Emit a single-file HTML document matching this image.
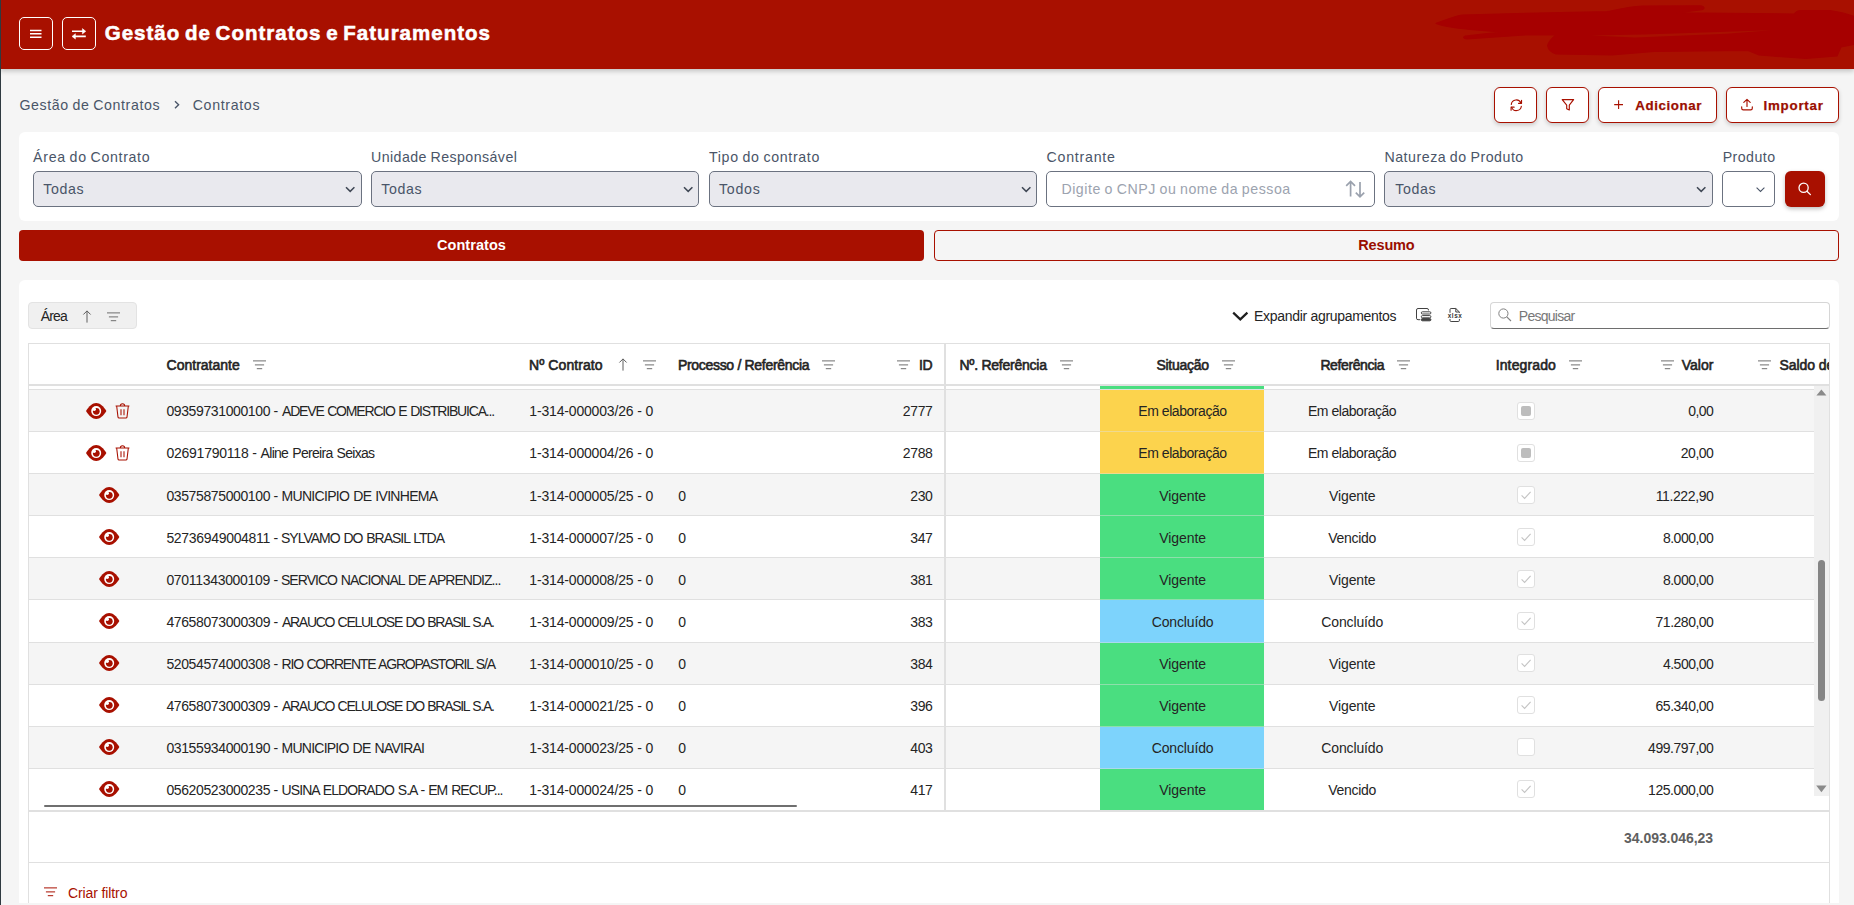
<!DOCTYPE html>
<html lang="pt-BR"><head><meta charset="utf-8"><title>Gestão de Contratos e Faturamentos</title>
<style>
html,body{margin:0;padding:0}
body{width:1854px;height:905px;overflow:hidden;background:#f5f5f5;position:relative;font-family:"Liberation Sans",sans-serif;color:#242424}
.t{position:absolute;white-space:nowrap}
.a{position:absolute;box-sizing:border-box}
svg{position:absolute;overflow:visible}
.hb{border:1px solid #fff;border-radius:5px}
.ob{border:1px solid #A81000;border-radius:6px;background:#fff;box-shadow:0 2px 4px rgba(0,0,0,.18)}
.sel{border:1px solid #6b7280;border-radius:5px;background:#e9e9ee;height:35.6px;top:171.2px;width:328.6px}
.row{left:29px;width:1785px;height:41px}
.rl{left:29px;width:1785px;height:1px;background:#e0e0e0}
.cb{left:1517px;width:18px;height:18px;border:1px solid #e0e0e0;border-radius:3px;background:#fff}

</style></head><body>
<div class="a" style="left:0;top:0;width:1854px;height:68.5px;background:#A81000;box-shadow:0 2px 5px rgba(0,0,0,.22)"></div>
<svg style="left:1430px;top:0px;" width="424" height="70" viewBox="0 0 424 70"><path fill="#A60000" stroke="#A60000" stroke-width="1.2" stroke-linejoin="round" d="M6 23.5C15 20 25 16 32 15L107 13L177 11.7C190 9 200 6.5 212 6L271 5.8C275 6.5 275 9 272 9.6L247 12.8L364 14C366 12 367 10.6 370 10.5L400 10.5C410 12 418 14 424 16.5L424 44.5L411 47L407 56L376 58.5L329 55L318 50.5L224 51.5L182 55L126 54C120 52 118 48 117.6 45.6C119 41 122 38 126 35L95 35L37 38.8C33 38.6 33 36.8 35 36.2L70 32L40 29.4C25 28 12 26 6 23.5Z"/>
<path fill="#A81000" d="M161 35.6L215 34.4L341 30.2L296 33.8L205 37.4Z"/></svg>
<div class="a " style="left:0px;top:0px;width:1px;height:905px;background:#2f3a40"></div>
<div class="a hb" style="left:19px;top:17px;width:34px;height:33px;"></div>
<div class="a hb" style="left:62px;top:17px;width:34px;height:33px;"></div>
<svg style="left:30px;top:29px;" width="12" height="10" viewBox="0 0 12 10"><path d="M0 1.4H11.5M0 4.7H11.5M0 8.2H11.5" stroke="#fff" stroke-width="1.5" fill="none"/></svg>
<svg style="left:71px;top:27px;" width="16" height="14" viewBox="0 0 16 14"><path d="M1 4.3H12M3.9 9.4H14.8" stroke="#fff" stroke-width="1.6" fill="none"/><path d="M11.4 1.6L14.8 4.3L11.4 7ZM4.4 6.7L1 9.4L4.4 12.1Z" fill="#fff" stroke="#fff" stroke-width=".5" stroke-linejoin="round"/></svg>
<svg style="left:174px;top:100px;" width="6" height="10" viewBox="0 0 6 10"><path d="M1 1.3L4.6 4.8L1 8.3" stroke="#4a5568" stroke-width="1.4" fill="none"/></svg>
<div class="a ob" style="left:1494px;top:87px;width:43px;height:36px;"></div>
<div class="a ob" style="left:1546px;top:87px;width:43px;height:36px;"></div>
<div class="a ob" style="left:1598px;top:87px;width:119px;height:36px;"></div>
<div class="a ob" style="left:1726px;top:87px;width:113px;height:36px;"></div>
<svg style="left:1509px;top:98.6px;" width="14.25" height="12.35" viewBox="0 0 15 13"><g stroke="#A81000" stroke-width="1.2" fill="none" stroke-linecap="round" stroke-linejoin="round">
<path d="M2.4 5.6A5.3 5.3 0 0 1 12.6 4.4"/><path d="M13.2 1.4V4.6H10"/>
<path d="M13 7.6A5.3 5.3 0 0 1 2.8 8.8"/><path d="M2.2 11.8V8.6H5.4"/></g></svg>
<svg style="left:1561px;top:98px;" width="14" height="13" viewBox="0 0 14 13"><path d="M1.2 1.6H12.6L8.3 7.2V12L5.7 10.7V7.2Z" stroke="#A81000" stroke-width="1.15" fill="none" stroke-linejoin="round"/></svg>
<svg style="left:1614px;top:100px;" width="10" height="10" viewBox="0 0 10 10"><path d="M4.6 0.2V9M0.2 4.6H9" stroke="#A81000" stroke-width="1.1" fill="none"/></svg>
<svg style="left:1740px;top:98px;" width="14" height="13" viewBox="0 0 14 13"><path d="M1.7 8.8V10.2A1.6 1.6 0 0 0 3.3 11.8H10.7A1.6 1.6 0 0 0 12.3 10.2V8.8M7 8.4V1.4M3.8 4.4L7 1.3L10.2 4.4" stroke="#A81000" stroke-width="1.15" fill="none" stroke-linecap="round" stroke-linejoin="round"/></svg>
<div class="a " style="left:19px;top:132px;width:1820px;height:89px;background:#fff;border-radius:6px"></div>
<div class="a sel" style="left:33.1px"></div>
<svg style="left:345.0px;top:186px;" width="11" height="7" viewBox="0 0 11 7"><path d="M1 1.2L5.2 5.4L9.4 1.2" stroke="#3f4754" stroke-width="1.5" fill="none"/></svg>
<div class="a sel" style="left:370.9px"></div>
<svg style="left:682.8px;top:186px;" width="11" height="7" viewBox="0 0 11 7"><path d="M1 1.2L5.2 5.4L9.4 1.2" stroke="#3f4754" stroke-width="1.5" fill="none"/></svg>
<div class="a sel" style="left:708.7px"></div>
<svg style="left:1020.6px;top:186px;" width="11" height="7" viewBox="0 0 11 7"><path d="M1 1.2L5.2 5.4L9.4 1.2" stroke="#3f4754" stroke-width="1.5" fill="none"/></svg>
<div class="a sel" style="left:1046.1px;background:#fff"></div>
<div class="a sel" style="left:1384.3px"></div>
<svg style="left:1696.1999999999998px;top:186px;" width="11" height="7" viewBox="0 0 11 7"><path d="M1 1.2L5.2 5.4L9.4 1.2" stroke="#3f4754" stroke-width="1.5" fill="none"/></svg>
<svg style="left:1344px;top:180px;" width="22" height="18" viewBox="0 0 22 18"><path d="M6.6 16.6V1.4M2.2 5.8L6.6 1.4L11 5.8M16 2V16.8M11.8 12.6L16 16.8L20.2 12.6" stroke="#9aa1ad" stroke-width="1.7" fill="none"/></svg>
<div class="a " style="left:1722px;top:171px;width:53px;height:36px;border:1px solid #6b7280;border-radius:5px;background:#fff"></div>
<svg style="left:1756.3px;top:187px;" width="10" height="6" viewBox="0 0 10 6"><path d="M0.6 0.6L4.5 4.4L8.4 0.6" stroke="#4a5568" stroke-width="1.1" fill="none"/></svg>
<div class="a " style="left:1785px;top:171px;width:40px;height:36px;background:#A81000;border-radius:6px;box-shadow:0 2px 4px rgba(0,0,0,.25)"></div>
<svg style="left:1798px;top:182px;" width="14" height="14" viewBox="0 0 14 14"><circle cx="5.6" cy="5.8" r="4.6" stroke="#fff" stroke-width="1.3" fill="none"/><path d="M9 9.2L12.4 12.6" stroke="#fff" stroke-width="1.3" stroke-linecap="round"/></svg>
<div class="a " style="left:19px;top:230px;width:905px;height:31px;background:#A81000;border-radius:4px"></div>
<div class="a " style="left:934px;top:230px;width:905px;height:31px;border:1px solid #A81000;border-radius:4px"></div>
<div class="a " style="left:19px;top:280px;width:1820px;height:623px;background:#fff;border-radius:6px 6px 0 0"></div>
<div class="a " style="left:28px;top:302px;width:109px;height:27px;background:#f0f0f0;border:1px solid #e3e3e3;border-radius:4px"></div>
<svg style="left:81.5px;top:310.2px;" width="10" height="13" viewBox="0 0 10 13"><path d="M5 12.6V0.9M1.4 4.5L5 0.9L8.6 4.5" stroke="#5e5e5e" stroke-width="1" fill="none"/></svg>
<svg style="left:107px;top:311.6px;" width="13" height="10" viewBox="0 0 13 10"><path d="M0 0.9H13M1.9 4.9H11.1M3.8 8.7H9.2" stroke="#6e6e6e" stroke-width="1" fill="none"/></svg>
<svg style="left:1232px;top:311px;" width="17" height="10" viewBox="0 0 17 10"><path d="M1.2 1.6L8.3 8.4L15.4 1.6" stroke="#1f1f1f" stroke-width="2.2" fill="none"/></svg>
<svg style="left:1415px;top:307px;" width="17" height="15" viewBox="0 0 17 15"><g fill="none" stroke="#424242" stroke-width="1">
<path d="M5.2 12.7H3A1.5 1.5 0 0 1 1.5 11.2V3A1.5 1.5 0 0 1 3 1.5H12A1.5 1.5 0 0 1 13.5 3V3.4"/>
<rect x="6.3" y="4.8" width="9.6" height="2.2" rx="1.1"/><rect x="6.3" y="8.6" width="9.6" height="2.2" rx="1.1"/><rect x="6.3" y="11.6" width="9.6" height="2.2" rx="1.1" fill="#424242"/></g></svg>
<svg style="left:1447px;top:307px;" width="16" height="16" viewBox="0 0 16 16"><g fill="none" stroke="#424242" stroke-width="1">
<path d="M3 5.8V2.6A1.1 1.1 0 0 1 4.1 1.5H8.8L12.4 5V5.8M8.8 1.5V5H12.4M3 12V13.4A1.1 1.1 0 0 0 4.1 14.5H11.3A1.1 1.1 0 0 0 12.4 13.4V12"/></g>
<text x="7.8" y="11.3" font-family="Liberation Sans, sans-serif" font-size="6.4" font-weight="700" text-anchor="middle" fill="#333" textLength="14">xlsx</text></svg>
<div class="a " style="left:1490px;top:302px;width:340px;height:27px;background:#fff;border:1px solid #d6d6d6;border-bottom:1px solid #6e6e6e;border-radius:4px"></div>
<svg style="left:1497px;top:307px;" width="16" height="16" viewBox="0 0 16 16"><circle cx="6.4" cy="6.5" r="4.6" stroke="#808080" stroke-width="1" fill="none"/><path d="M9.8 9.9L14 14" stroke="#808080" stroke-width="1.1"/></svg>
<div class="a " style="left:28px;top:343px;width:1802px;height:560px;border:1px solid #e0e0e0;border-bottom:none"></div>
<div class="a " style="left:29px;top:384px;width:1800px;height:2px;background:#e0e0e0"></div>
<div class="a " style="left:1100px;top:386px;width:164px;height:3px;background:#4ade80"></div>
<div class="a rl" style="left:29px;top:389px;width:1785px;height:1px;"></div>
<div class="a row" style="top:390px;height:41px;background:#f5f5f5"></div>
<div class="a rl" style="top:431px"></div>
<div class="a " style="left:1100px;top:390px;width:164px;height:41px;background:#fcd34d"></div>
<div class="a " style="left:1100px;top:431px;width:164px;height:1px;background:#fcd34d;opacity:.55"></div>
<svg style="left:85.7px;top:403px;" width="20.4" height="16" viewBox="0 0 20.4 16"><path d="M0 8C3 3.2 6.4 0 10.2 0C14 0 17.4 3.2 20.4 8C17.4 12.8 14 16 10.2 16C6.4 16 3 12.8 0 8Z" fill="#A81000"/>
<circle cx="10.2" cy="8.1" r="5" fill="#fff"/><circle cx="10.3" cy="8.3" r="3.35" fill="#A81000"/><circle cx="8.2" cy="6.2" r="1.75" fill="#fff"/></svg>
<svg style="left:114.8px;top:403px;" width="15" height="16" viewBox="0 0 15 16"><g fill="none" stroke="#A81000" stroke-width="1.05">
<path d="M0.6 2.9H14.4M5.3 2.9A2.2 2.2 0 0 1 9.7 2.9M1.7 3.2L3 14.1A1.1 1.1 0 0 0 4.1 15H10.9A1.1 1.1 0 0 0 12 14.1L13.3 3.2M6 6.2V12.2M9 6.2V12.2"/></g></svg>
<div class="a cb" style="top:402px"></div>
<div class="a " style="left:1521px;top:406px;width:10px;height:10px;background:#bdbdbd;border-radius:2px"></div>
<div class="a row" style="top:432px;height:41px;background:#fff"></div>
<div class="a rl" style="top:473px"></div>
<div class="a " style="left:1100px;top:432px;width:164px;height:41px;background:#fcd34d"></div>
<div class="a " style="left:1100px;top:473px;width:164px;height:1px;background:#fcd34d;opacity:.55"></div>
<svg style="left:85.7px;top:445px;" width="20.4" height="16" viewBox="0 0 20.4 16"><path d="M0 8C3 3.2 6.4 0 10.2 0C14 0 17.4 3.2 20.4 8C17.4 12.8 14 16 10.2 16C6.4 16 3 12.8 0 8Z" fill="#A81000"/>
<circle cx="10.2" cy="8.1" r="5" fill="#fff"/><circle cx="10.3" cy="8.3" r="3.35" fill="#A81000"/><circle cx="8.2" cy="6.2" r="1.75" fill="#fff"/></svg>
<svg style="left:114.8px;top:445px;" width="15" height="16" viewBox="0 0 15 16"><g fill="none" stroke="#A81000" stroke-width="1.05">
<path d="M0.6 2.9H14.4M5.3 2.9A2.2 2.2 0 0 1 9.7 2.9M1.7 3.2L3 14.1A1.1 1.1 0 0 0 4.1 15H10.9A1.1 1.1 0 0 0 12 14.1L13.3 3.2M6 6.2V12.2M9 6.2V12.2"/></g></svg>
<div class="a cb" style="top:444px"></div>
<div class="a " style="left:1521px;top:448px;width:10px;height:10px;background:#bdbdbd;border-radius:2px"></div>
<div class="a row" style="top:474px;height:41px;background:#f5f5f5"></div>
<div class="a rl" style="top:515px"></div>
<div class="a " style="left:1100px;top:474px;width:164px;height:41px;background:#4ade80"></div>
<div class="a " style="left:1100px;top:515px;width:164px;height:1px;background:#4ade80;opacity:.55"></div>
<svg style="left:99.3px;top:487px;" width="20.4" height="16" viewBox="0 0 20.4 16"><path d="M0 8C3 3.2 6.4 0 10.2 0C14 0 17.4 3.2 20.4 8C17.4 12.8 14 16 10.2 16C6.4 16 3 12.8 0 8Z" fill="#A81000"/>
<circle cx="10.2" cy="8.1" r="5" fill="#fff"/><circle cx="10.3" cy="8.3" r="3.35" fill="#A81000"/><circle cx="8.2" cy="6.2" r="1.75" fill="#fff"/></svg>
<div class="a cb" style="top:486px"></div>
<svg style="left:1520px;top:489px;" width="12" height="12" viewBox="0 0 12 12"><path d="M1.6 6.4L4.6 9.4L10.6 2.8" stroke="#c4c4c4" stroke-width="1.1" fill="none"/></svg>
<div class="a row" style="top:516px;height:41px;background:#fff"></div>
<div class="a rl" style="top:557px"></div>
<div class="a " style="left:1100px;top:516px;width:164px;height:41px;background:#4ade80"></div>
<div class="a " style="left:1100px;top:557px;width:164px;height:1px;background:#4ade80;opacity:.55"></div>
<svg style="left:99.3px;top:529px;" width="20.4" height="16" viewBox="0 0 20.4 16"><path d="M0 8C3 3.2 6.4 0 10.2 0C14 0 17.4 3.2 20.4 8C17.4 12.8 14 16 10.2 16C6.4 16 3 12.8 0 8Z" fill="#A81000"/>
<circle cx="10.2" cy="8.1" r="5" fill="#fff"/><circle cx="10.3" cy="8.3" r="3.35" fill="#A81000"/><circle cx="8.2" cy="6.2" r="1.75" fill="#fff"/></svg>
<div class="a cb" style="top:528px"></div>
<svg style="left:1520px;top:531px;" width="12" height="12" viewBox="0 0 12 12"><path d="M1.6 6.4L4.6 9.4L10.6 2.8" stroke="#c4c4c4" stroke-width="1.1" fill="none"/></svg>
<div class="a row" style="top:558px;height:41px;background:#f5f5f5"></div>
<div class="a rl" style="top:599px"></div>
<div class="a " style="left:1100px;top:558px;width:164px;height:41px;background:#4ade80"></div>
<div class="a " style="left:1100px;top:599px;width:164px;height:1px;background:#4ade80;opacity:.55"></div>
<svg style="left:99.3px;top:571px;" width="20.4" height="16" viewBox="0 0 20.4 16"><path d="M0 8C3 3.2 6.4 0 10.2 0C14 0 17.4 3.2 20.4 8C17.4 12.8 14 16 10.2 16C6.4 16 3 12.8 0 8Z" fill="#A81000"/>
<circle cx="10.2" cy="8.1" r="5" fill="#fff"/><circle cx="10.3" cy="8.3" r="3.35" fill="#A81000"/><circle cx="8.2" cy="6.2" r="1.75" fill="#fff"/></svg>
<div class="a cb" style="top:570px"></div>
<svg style="left:1520px;top:573px;" width="12" height="12" viewBox="0 0 12 12"><path d="M1.6 6.4L4.6 9.4L10.6 2.8" stroke="#c4c4c4" stroke-width="1.1" fill="none"/></svg>
<div class="a row" style="top:600px;height:42px;background:#fff"></div>
<div class="a rl" style="top:642px"></div>
<div class="a " style="left:1100px;top:600px;width:164px;height:42px;background:#7dd3fc"></div>
<div class="a " style="left:1100px;top:642px;width:164px;height:1px;background:#7dd3fc;opacity:.55"></div>
<svg style="left:99.3px;top:613px;" width="20.4" height="16" viewBox="0 0 20.4 16"><path d="M0 8C3 3.2 6.4 0 10.2 0C14 0 17.4 3.2 20.4 8C17.4 12.8 14 16 10.2 16C6.4 16 3 12.8 0 8Z" fill="#A81000"/>
<circle cx="10.2" cy="8.1" r="5" fill="#fff"/><circle cx="10.3" cy="8.3" r="3.35" fill="#A81000"/><circle cx="8.2" cy="6.2" r="1.75" fill="#fff"/></svg>
<div class="a cb" style="top:612px"></div>
<svg style="left:1520px;top:615px;" width="12" height="12" viewBox="0 0 12 12"><path d="M1.6 6.4L4.6 9.4L10.6 2.8" stroke="#c4c4c4" stroke-width="1.1" fill="none"/></svg>
<div class="a row" style="top:643px;height:41px;background:#f5f5f5"></div>
<div class="a rl" style="top:684px"></div>
<div class="a " style="left:1100px;top:643px;width:164px;height:41px;background:#4ade80"></div>
<div class="a " style="left:1100px;top:684px;width:164px;height:1px;background:#4ade80;opacity:.55"></div>
<svg style="left:99.3px;top:655px;" width="20.4" height="16" viewBox="0 0 20.4 16"><path d="M0 8C3 3.2 6.4 0 10.2 0C14 0 17.4 3.2 20.4 8C17.4 12.8 14 16 10.2 16C6.4 16 3 12.8 0 8Z" fill="#A81000"/>
<circle cx="10.2" cy="8.1" r="5" fill="#fff"/><circle cx="10.3" cy="8.3" r="3.35" fill="#A81000"/><circle cx="8.2" cy="6.2" r="1.75" fill="#fff"/></svg>
<div class="a cb" style="top:654px"></div>
<svg style="left:1520px;top:657px;" width="12" height="12" viewBox="0 0 12 12"><path d="M1.6 6.4L4.6 9.4L10.6 2.8" stroke="#c4c4c4" stroke-width="1.1" fill="none"/></svg>
<div class="a row" style="top:685px;height:41px;background:#fff"></div>
<div class="a rl" style="top:726px"></div>
<div class="a " style="left:1100px;top:685px;width:164px;height:41px;background:#4ade80"></div>
<div class="a " style="left:1100px;top:726px;width:164px;height:1px;background:#4ade80;opacity:.55"></div>
<svg style="left:99.3px;top:697px;" width="20.4" height="16" viewBox="0 0 20.4 16"><path d="M0 8C3 3.2 6.4 0 10.2 0C14 0 17.4 3.2 20.4 8C17.4 12.8 14 16 10.2 16C6.4 16 3 12.8 0 8Z" fill="#A81000"/>
<circle cx="10.2" cy="8.1" r="5" fill="#fff"/><circle cx="10.3" cy="8.3" r="3.35" fill="#A81000"/><circle cx="8.2" cy="6.2" r="1.75" fill="#fff"/></svg>
<div class="a cb" style="top:696px"></div>
<svg style="left:1520px;top:699px;" width="12" height="12" viewBox="0 0 12 12"><path d="M1.6 6.4L4.6 9.4L10.6 2.8" stroke="#c4c4c4" stroke-width="1.1" fill="none"/></svg>
<div class="a row" style="top:727px;height:41px;background:#f5f5f5"></div>
<div class="a rl" style="top:768px"></div>
<div class="a " style="left:1100px;top:727px;width:164px;height:41px;background:#7dd3fc"></div>
<div class="a " style="left:1100px;top:768px;width:164px;height:1px;background:#7dd3fc;opacity:.55"></div>
<svg style="left:99.3px;top:739px;" width="20.4" height="16" viewBox="0 0 20.4 16"><path d="M0 8C3 3.2 6.4 0 10.2 0C14 0 17.4 3.2 20.4 8C17.4 12.8 14 16 10.2 16C6.4 16 3 12.8 0 8Z" fill="#A81000"/>
<circle cx="10.2" cy="8.1" r="5" fill="#fff"/><circle cx="10.3" cy="8.3" r="3.35" fill="#A81000"/><circle cx="8.2" cy="6.2" r="1.75" fill="#fff"/></svg>
<div class="a cb" style="top:738px"></div>
<div class="a row" style="top:769px;height:41px;background:#fff"></div>
<div class="a " style="left:1100px;top:769px;width:164px;height:41px;background:#4ade80"></div>
<svg style="left:99.3px;top:781px;" width="20.4" height="16" viewBox="0 0 20.4 16"><path d="M0 8C3 3.2 6.4 0 10.2 0C14 0 17.4 3.2 20.4 8C17.4 12.8 14 16 10.2 16C6.4 16 3 12.8 0 8Z" fill="#A81000"/>
<circle cx="10.2" cy="8.1" r="5" fill="#fff"/><circle cx="10.3" cy="8.3" r="3.35" fill="#A81000"/><circle cx="8.2" cy="6.2" r="1.75" fill="#fff"/></svg>
<div class="a cb" style="top:780px"></div>
<svg style="left:1520px;top:783px;" width="12" height="12" viewBox="0 0 12 12"><path d="M1.6 6.4L4.6 9.4L10.6 2.8" stroke="#c4c4c4" stroke-width="1.1" fill="none"/></svg>
<div class="a " style="left:944px;top:344px;width:2px;height:466px;background:#e0e0e0"></div>
<svg style="left:252.9px;top:359.8px;" width="13" height="10" viewBox="0 0 13 10"><path d="M0 0.9H13M1.9 4.9H11.1M3.8 8.7H9.2" stroke="#6e6e6e" stroke-width="1" fill="none"/></svg>
<svg style="left:617.5px;top:358.3px;" width="10" height="13" viewBox="0 0 10 13"><path d="M5 12.6V0.9M1.4 4.5L5 0.9L8.6 4.5" stroke="#5e5e5e" stroke-width="1" fill="none"/></svg>
<svg style="left:643px;top:359.8px;" width="13" height="10" viewBox="0 0 13 10"><path d="M0 0.9H13M1.9 4.9H11.1M3.8 8.7H9.2" stroke="#6e6e6e" stroke-width="1" fill="none"/></svg>
<svg style="left:822px;top:359.8px;" width="13" height="10" viewBox="0 0 13 10"><path d="M0 0.9H13M1.9 4.9H11.1M3.8 8.7H9.2" stroke="#6e6e6e" stroke-width="1" fill="none"/></svg>
<svg style="left:897px;top:359.8px;" width="13" height="10" viewBox="0 0 13 10"><path d="M0 0.9H13M1.9 4.9H11.1M3.8 8.7H9.2" stroke="#6e6e6e" stroke-width="1" fill="none"/></svg>
<svg style="left:1059.9px;top:359.8px;" width="13" height="10" viewBox="0 0 13 10"><path d="M0 0.9H13M1.9 4.9H11.1M3.8 8.7H9.2" stroke="#6e6e6e" stroke-width="1" fill="none"/></svg>
<svg style="left:1221.6px;top:359.8px;" width="13" height="10" viewBox="0 0 13 10"><path d="M0 0.9H13M1.9 4.9H11.1M3.8 8.7H9.2" stroke="#6e6e6e" stroke-width="1" fill="none"/></svg>
<svg style="left:1397px;top:359.8px;" width="13" height="10" viewBox="0 0 13 10"><path d="M0 0.9H13M1.9 4.9H11.1M3.8 8.7H9.2" stroke="#6e6e6e" stroke-width="1" fill="none"/></svg>
<svg style="left:1569px;top:359.8px;" width="13" height="10" viewBox="0 0 13 10"><path d="M0 0.9H13M1.9 4.9H11.1M3.8 8.7H9.2" stroke="#6e6e6e" stroke-width="1" fill="none"/></svg>
<svg style="left:1660.7px;top:359.8px;" width="13" height="10" viewBox="0 0 13 10"><path d="M0 0.9H13M1.9 4.9H11.1M3.8 8.7H9.2" stroke="#6e6e6e" stroke-width="1" fill="none"/></svg>
<svg style="left:1758.3px;top:359.8px;" width="13" height="10" viewBox="0 0 13 10"><path d="M0 0.9H13M1.9 4.9H11.1M3.8 8.7H9.2" stroke="#6e6e6e" stroke-width="1" fill="none"/></svg>
<div class="a" style="left:1779px;top:350px;width:50px;height:30px;overflow:hidden"><span class="t" style="left:0.4px;top:6.15px;font-size:14px;line-height:18px;-webkit-text-stroke:0.6px #242424;letter-spacing:-0.05px">Saldo devedor</span></div>
<div class="a " style="left:1814px;top:386px;width:15px;height:410px;background:#f0f0f0"></div>
<svg style="left:1816px;top:389px;" width="11" height="7" viewBox="0 0 11 7"><path d="M0.4 6.6L5.4 0.4L10.4 6.6Z" fill="#8a8a8a"/></svg>
<svg style="left:1816px;top:785px;" width="11" height="8" viewBox="0 0 11 8"><path d="M0.2 0.4L5.4 7.2L10.6 0.4Z" fill="#8a8a8a"/></svg>
<div class="a " style="left:1818px;top:560px;width:7px;height:141px;background:#858585;border-radius:3.5px"></div>
<div class="a " style="left:44px;top:805px;width:753px;height:2px;background:#6f6f6f;border-radius:1px"></div>
<div class="a " style="left:29px;top:810px;width:1800px;height:2px;background:#e0e0e0"></div>
<div class="a " style="left:29px;top:862px;width:1800px;height:1px;background:#e0e0e0"></div>
<svg style="left:44px;top:887.2px;" width="13" height="10" viewBox="0 0 13 10"><path d="M0 0.9H13M1.9 4.9H11.1M3.8 8.7H9.2" stroke="#A81000" stroke-width="1" fill="none"/></svg>
<span class="t" style="top:19.40px;font-size:20.5px;line-height:27px;color:#fff;font-weight:700;letter-spacing:1.010px;left:104.70px;-webkit-text-stroke:0.55px #fff;word-spacing:-2px;">Gestão de Contratos e Faturamentos</span>
<span class="t" style="top:95.88px;font-size:14.2px;line-height:18px;color:#4a5568;letter-spacing:0.604px;left:19.40px;word-spacing:-0.8px;">Gestão de Contratos</span>
<span class="t" style="top:95.88px;font-size:14.2px;line-height:18px;color:#4a5568;letter-spacing:0.665px;left:192.70px;">Contratos</span>
<span class="t" style="top:96.59px;font-size:13.3px;line-height:17px;color:#9a0e00;font-weight:700;letter-spacing:0.586px;left:1635.30px;-webkit-text-stroke:0.25px #9a0e00;">Adicionar</span>
<span class="t" style="top:96.59px;font-size:13.3px;line-height:17px;color:#9a0e00;font-weight:700;letter-spacing:0.808px;left:1763.40px;-webkit-text-stroke:0.25px #9a0e00;">Importar</span>
<span class="t" style="top:147.68px;font-size:14.2px;line-height:18px;color:#4a5568;letter-spacing:0.672px;left:33.10px;word-spacing:-0.8px;">Área do Contrato</span>
<span class="t" style="top:147.68px;font-size:14.2px;line-height:18px;color:#4a5568;letter-spacing:0.436px;left:371.00px;word-spacing:-0.8px;">Unidade Responsável</span>
<span class="t" style="top:147.68px;font-size:14.2px;line-height:18px;color:#4a5568;letter-spacing:0.662px;left:709.00px;word-spacing:-0.8px;">Tipo do contrato</span>
<span class="t" style="top:147.68px;font-size:14.2px;line-height:18px;color:#4a5568;letter-spacing:0.743px;left:1046.60px;word-spacing:-0.8px;">Contrante</span>
<span class="t" style="top:147.68px;font-size:14.2px;line-height:18px;color:#4a5568;letter-spacing:0.530px;left:1384.40px;word-spacing:-0.8px;">Natureza do Produto</span>
<span class="t" style="top:147.68px;font-size:14.2px;line-height:18px;color:#4a5568;letter-spacing:0.442px;left:1722.70px;word-spacing:-0.8px;">Produto</span>
<span class="t" style="top:179.88px;font-size:14.2px;line-height:18px;color:#4a5568;letter-spacing:0.648px;left:43.20px;">Todas</span>
<span class="t" style="top:179.88px;font-size:14.2px;line-height:18px;color:#4a5568;letter-spacing:0.648px;left:381.20px;">Todas</span>
<span class="t" style="top:179.88px;font-size:14.2px;line-height:18px;color:#4a5568;letter-spacing:0.748px;left:719.00px;">Todos</span>
<span class="t" style="top:179.88px;font-size:14.2px;line-height:18px;color:#4a5568;letter-spacing:0.648px;left:1395.20px;">Todas</span>
<span class="t" style="top:179.88px;font-size:14.2px;line-height:18px;color:#9ca3af;letter-spacing:0.533px;left:1061.40px;word-spacing:-0.8px;">Digite o CNPJ ou nome da pessoa</span>
<span class="t" style="top:235.78px;font-size:14.5px;line-height:19px;color:#fff;font-weight:700;letter-spacing:0.057px;left:437.00px;">Contratos</span>
<span class="t" style="top:235.78px;font-size:14.5px;line-height:19px;color:#9a0e00;font-weight:700;letter-spacing:-0.170px;left:1358.30px;">Resumo</span>
<span class="t" style="top:307.15px;font-size:14px;line-height:18px;color:#242424;letter-spacing:-0.870px;left:40.80px;">Área</span>
<span class="t" style="top:306.65px;font-size:14px;line-height:18px;color:#242424;letter-spacing:-0.303px;left:1254.00px;">Expandir agrupamentos</span>
<span class="t" style="top:306.65px;font-size:14px;line-height:18px;color:#787878;letter-spacing:-0.741px;left:1518.80px;">Pesquisar</span>
<span class="t" style="top:402.15px;font-size:14px;line-height:18px;color:#242424;letter-spacing:-0.379px;left:166.40px;">09359731000100 -</span>
<span class="t" style="top:402.15px;font-size:14px;line-height:18px;color:#242424;letter-spacing:-1.178px;left:282.00px;word-spacing:0.9px;">ADEVE COMERCIO E DISTRIBUICA...</span>
<span class="t" style="top:402.15px;font-size:14px;line-height:18px;color:#242424;letter-spacing:-0.167px;left:529.30px;">1-314-000003/26 - 0</span>
<span class="t" style="top:402.15px;font-size:14px;line-height:18px;color:#242424;letter-spacing:-0.369px;right:921.47px;">2777</span>
<span class="t" style="top:402.15px;font-size:14px;line-height:18px;color:#242424;letter-spacing:-0.452px;left:782.47px;width:800px;text-align:center;">Em elaboração</span>
<span class="t" style="top:402.15px;font-size:14px;line-height:18px;color:#242424;letter-spacing:-0.452px;left:952.07px;width:800px;text-align:center;">Em elaboração</span>
<span class="t" style="top:402.15px;font-size:14px;line-height:18px;color:#242424;letter-spacing:-0.502px;right:140.60px;">0,00</span>
<span class="t" style="top:444.15px;font-size:14px;line-height:18px;color:#242424;letter-spacing:-0.229px;left:166.40px;">02691790118 -</span>
<span class="t" style="top:444.15px;font-size:14px;line-height:18px;color:#242424;letter-spacing:-0.704px;left:260.60px;word-spacing:0.9px;">Aline Pereira Seixas</span>
<span class="t" style="top:444.15px;font-size:14px;line-height:18px;color:#242424;letter-spacing:-0.167px;left:529.30px;">1-314-000004/26 - 0</span>
<span class="t" style="top:444.15px;font-size:14px;line-height:18px;color:#242424;letter-spacing:-0.369px;right:921.47px;">2788</span>
<span class="t" style="top:444.15px;font-size:14px;line-height:18px;color:#242424;letter-spacing:-0.452px;left:782.47px;width:800px;text-align:center;">Em elaboração</span>
<span class="t" style="top:444.15px;font-size:14px;line-height:18px;color:#242424;letter-spacing:-0.452px;left:952.07px;width:800px;text-align:center;">Em elaboração</span>
<span class="t" style="top:444.15px;font-size:14px;line-height:18px;color:#242424;letter-spacing:-0.477px;right:140.58px;">20,00</span>
<span class="t" style="top:487.15px;font-size:14px;line-height:18px;color:#242424;letter-spacing:-0.379px;left:166.40px;">03575875000100 -</span>
<span class="t" style="top:487.15px;font-size:14px;line-height:18px;color:#242424;letter-spacing:-0.704px;left:281.60px;word-spacing:0.9px;">MUNICIPIO DE IVINHEMA</span>
<span class="t" style="top:487.15px;font-size:14px;line-height:18px;color:#242424;letter-spacing:-0.167px;left:529.30px;">1-314-000005/25 - 0</span>
<span class="t" style="top:487.15px;font-size:14px;line-height:18px;color:#242424;letter-spacing:-1.097px;left:678.30px;">0</span>
<span class="t" style="top:487.15px;font-size:14px;line-height:18px;color:#242424;letter-spacing:-0.366px;right:921.47px;">230</span>
<span class="t" style="top:487.15px;font-size:14px;line-height:18px;color:#242424;letter-spacing:-0.091px;left:782.65px;width:800px;text-align:center;">Vigente</span>
<span class="t" style="top:487.15px;font-size:14px;line-height:18px;color:#242424;letter-spacing:-0.091px;left:952.25px;width:800px;text-align:center;">Vigente</span>
<span class="t" style="top:487.15px;font-size:14px;line-height:18px;color:#242424;letter-spacing:-0.372px;right:140.47px;">11.222,90</span>
<span class="t" style="top:529.15px;font-size:14px;line-height:18px;color:#242424;letter-spacing:-0.314px;left:166.40px;">52736949004811 -</span>
<span class="t" style="top:529.15px;font-size:14px;line-height:18px;color:#242424;letter-spacing:-1.001px;left:281.00px;word-spacing:0.9px;">SYLVAMO DO BRASIL LTDA</span>
<span class="t" style="top:529.15px;font-size:14px;line-height:18px;color:#242424;letter-spacing:-0.167px;left:529.30px;">1-314-000007/25 - 0</span>
<span class="t" style="top:529.15px;font-size:14px;line-height:18px;color:#242424;letter-spacing:-1.097px;left:678.30px;">0</span>
<span class="t" style="top:529.15px;font-size:14px;line-height:18px;color:#242424;letter-spacing:-0.366px;right:921.47px;">347</span>
<span class="t" style="top:529.15px;font-size:14px;line-height:18px;color:#242424;letter-spacing:-0.091px;left:782.65px;width:800px;text-align:center;">Vigente</span>
<span class="t" style="top:529.15px;font-size:14px;line-height:18px;color:#242424;letter-spacing:-0.290px;left:952.16px;width:800px;text-align:center;">Vencido</span>
<span class="t" style="top:529.15px;font-size:14px;line-height:18px;color:#242424;letter-spacing:-0.502px;right:140.60px;">8.000,00</span>
<span class="t" style="top:571.15px;font-size:14px;line-height:18px;color:#242424;letter-spacing:-0.314px;left:166.40px;">07011343000109 -</span>
<span class="t" style="top:571.15px;font-size:14px;line-height:18px;color:#242424;letter-spacing:-0.965px;left:281.00px;word-spacing:0.9px;">SERVICO NACIONAL DE APRENDIZ...</span>
<span class="t" style="top:571.15px;font-size:14px;line-height:18px;color:#242424;letter-spacing:-0.167px;left:529.30px;">1-314-000008/25 - 0</span>
<span class="t" style="top:571.15px;font-size:14px;line-height:18px;color:#242424;letter-spacing:-1.097px;left:678.30px;">0</span>
<span class="t" style="top:571.15px;font-size:14px;line-height:18px;color:#242424;letter-spacing:-0.366px;right:921.47px;">381</span>
<span class="t" style="top:571.15px;font-size:14px;line-height:18px;color:#242424;letter-spacing:-0.091px;left:782.65px;width:800px;text-align:center;">Vigente</span>
<span class="t" style="top:571.15px;font-size:14px;line-height:18px;color:#242424;letter-spacing:-0.091px;left:952.25px;width:800px;text-align:center;">Vigente</span>
<span class="t" style="top:571.15px;font-size:14px;line-height:18px;color:#242424;letter-spacing:-0.502px;right:140.60px;">8.000,00</span>
<span class="t" style="top:613.15px;font-size:14px;line-height:18px;color:#242424;letter-spacing:-0.379px;left:166.40px;">47658073000309 -</span>
<span class="t" style="top:613.15px;font-size:14px;line-height:18px;color:#242424;letter-spacing:-1.297px;left:282.00px;word-spacing:0.9px;">ARAUCO CELULOSE DO BRASIL S.A.</span>
<span class="t" style="top:613.15px;font-size:14px;line-height:18px;color:#242424;letter-spacing:-0.167px;left:529.30px;">1-314-000009/25 - 0</span>
<span class="t" style="top:613.15px;font-size:14px;line-height:18px;color:#242424;letter-spacing:-1.097px;left:678.30px;">0</span>
<span class="t" style="top:613.15px;font-size:14px;line-height:18px;color:#242424;letter-spacing:-0.366px;right:921.47px;">383</span>
<span class="t" style="top:613.15px;font-size:14px;line-height:18px;color:#242424;letter-spacing:-0.139px;left:782.63px;width:800px;text-align:center;">Concluído</span>
<span class="t" style="top:613.15px;font-size:14px;line-height:18px;color:#242424;letter-spacing:-0.139px;left:952.23px;width:800px;text-align:center;">Concluído</span>
<span class="t" style="top:613.15px;font-size:14px;line-height:18px;color:#242424;letter-spacing:-0.488px;right:140.59px;">71.280,00</span>
<span class="t" style="top:655.15px;font-size:14px;line-height:18px;color:#242424;letter-spacing:-0.379px;left:166.40px;">52054574000308 -</span>
<span class="t" style="top:655.15px;font-size:14px;line-height:18px;color:#242424;letter-spacing:-1.210px;left:281.60px;word-spacing:0.9px;">RIO CORRENTE AGROPASTORIL S/A</span>
<span class="t" style="top:655.15px;font-size:14px;line-height:18px;color:#242424;letter-spacing:-0.167px;left:529.30px;">1-314-000010/25 - 0</span>
<span class="t" style="top:655.15px;font-size:14px;line-height:18px;color:#242424;letter-spacing:-1.097px;left:678.30px;">0</span>
<span class="t" style="top:655.15px;font-size:14px;line-height:18px;color:#242424;letter-spacing:-0.366px;right:921.47px;">384</span>
<span class="t" style="top:655.15px;font-size:14px;line-height:18px;color:#242424;letter-spacing:-0.091px;left:782.65px;width:800px;text-align:center;">Vigente</span>
<span class="t" style="top:655.15px;font-size:14px;line-height:18px;color:#242424;letter-spacing:-0.091px;left:952.25px;width:800px;text-align:center;">Vigente</span>
<span class="t" style="top:655.15px;font-size:14px;line-height:18px;color:#242424;letter-spacing:-0.502px;right:140.60px;">4.500,00</span>
<span class="t" style="top:697.15px;font-size:14px;line-height:18px;color:#242424;letter-spacing:-0.379px;left:166.40px;">47658073000309 -</span>
<span class="t" style="top:697.15px;font-size:14px;line-height:18px;color:#242424;letter-spacing:-1.297px;left:282.00px;word-spacing:0.9px;">ARAUCO CELULOSE DO BRASIL S.A.</span>
<span class="t" style="top:697.15px;font-size:14px;line-height:18px;color:#242424;letter-spacing:-0.167px;left:529.30px;">1-314-000021/25 - 0</span>
<span class="t" style="top:697.15px;font-size:14px;line-height:18px;color:#242424;letter-spacing:-1.097px;left:678.30px;">0</span>
<span class="t" style="top:697.15px;font-size:14px;line-height:18px;color:#242424;letter-spacing:-0.366px;right:921.47px;">396</span>
<span class="t" style="top:697.15px;font-size:14px;line-height:18px;color:#242424;letter-spacing:-0.091px;left:782.65px;width:800px;text-align:center;">Vigente</span>
<span class="t" style="top:697.15px;font-size:14px;line-height:18px;color:#242424;letter-spacing:-0.091px;left:952.25px;width:800px;text-align:center;">Vigente</span>
<span class="t" style="top:697.15px;font-size:14px;line-height:18px;color:#242424;letter-spacing:-0.488px;right:140.59px;">65.340,00</span>
<span class="t" style="top:739.15px;font-size:14px;line-height:18px;color:#242424;letter-spacing:-0.379px;left:166.40px;">03155934000190 -</span>
<span class="t" style="top:739.15px;font-size:14px;line-height:18px;color:#242424;letter-spacing:-0.765px;left:281.60px;word-spacing:0.9px;">MUNICIPIO DE NAVIRAI</span>
<span class="t" style="top:739.15px;font-size:14px;line-height:18px;color:#242424;letter-spacing:-0.167px;left:529.30px;">1-314-000023/25 - 0</span>
<span class="t" style="top:739.15px;font-size:14px;line-height:18px;color:#242424;letter-spacing:-1.097px;left:678.30px;">0</span>
<span class="t" style="top:739.15px;font-size:14px;line-height:18px;color:#242424;letter-spacing:-0.366px;right:921.47px;">403</span>
<span class="t" style="top:739.15px;font-size:14px;line-height:18px;color:#242424;letter-spacing:-0.139px;left:782.63px;width:800px;text-align:center;">Concluído</span>
<span class="t" style="top:739.15px;font-size:14px;line-height:18px;color:#242424;letter-spacing:-0.139px;left:952.23px;width:800px;text-align:center;">Concluído</span>
<span class="t" style="top:739.15px;font-size:14px;line-height:18px;color:#242424;letter-spacing:-0.475px;right:140.58px;">499.797,00</span>
<span class="t" style="top:781.15px;font-size:14px;line-height:18px;color:#242424;letter-spacing:-0.379px;left:166.40px;">05620523000235 -</span>
<span class="t" style="top:781.15px;font-size:14px;line-height:18px;color:#242424;letter-spacing:-0.934px;left:281.60px;word-spacing:0.9px;">USINA ELDORADO S.A - EM RECUP...</span>
<span class="t" style="top:781.15px;font-size:14px;line-height:18px;color:#242424;letter-spacing:-0.167px;left:529.30px;">1-314-000024/25 - 0</span>
<span class="t" style="top:781.15px;font-size:14px;line-height:18px;color:#242424;letter-spacing:-1.097px;left:678.30px;">0</span>
<span class="t" style="top:781.15px;font-size:14px;line-height:18px;color:#242424;letter-spacing:-0.366px;right:921.47px;">417</span>
<span class="t" style="top:781.15px;font-size:14px;line-height:18px;color:#242424;letter-spacing:-0.091px;left:782.65px;width:800px;text-align:center;">Vigente</span>
<span class="t" style="top:781.15px;font-size:14px;line-height:18px;color:#242424;letter-spacing:-0.290px;left:952.16px;width:800px;text-align:center;">Vencido</span>
<span class="t" style="top:781.15px;font-size:14px;line-height:18px;color:#242424;letter-spacing:-0.475px;right:140.58px;">125.000,00</span>
<span class="t" style="top:356.15px;font-size:14px;line-height:18px;color:#242424;letter-spacing:-0.007px;left:166.60px;-webkit-text-stroke:0.6px #242424;">Contratante</span>
<span class="t" style="top:356.15px;font-size:14px;line-height:18px;color:#242424;letter-spacing:0.081px;left:529.00px;-webkit-text-stroke:0.6px #242424;">Nº Contrato</span>
<span class="t" style="top:356.15px;font-size:14px;line-height:18px;color:#242424;letter-spacing:-0.306px;left:677.90px;-webkit-text-stroke:0.6px #242424;">Processo / Referência</span>
<span class="t" style="top:356.15px;font-size:14px;line-height:18px;color:#242424;letter-spacing:-0.300px;left:918.90px;-webkit-text-stroke:0.6px #242424;">ID</span>
<span class="t" style="top:356.15px;font-size:14px;line-height:18px;color:#242424;letter-spacing:-0.244px;left:959.40px;-webkit-text-stroke:0.6px #242424;">Nº. Referência</span>
<span class="t" style="top:356.15px;font-size:14px;line-height:18px;color:#242424;letter-spacing:-0.273px;left:1156.40px;-webkit-text-stroke:0.6px #242424;">Situação</span>
<span class="t" style="top:356.15px;font-size:14px;line-height:18px;color:#242424;letter-spacing:-0.390px;left:1320.40px;-webkit-text-stroke:0.6px #242424;">Referência</span>
<span class="t" style="top:356.15px;font-size:14px;line-height:18px;color:#242424;letter-spacing:0.125px;left:1495.70px;-webkit-text-stroke:0.6px #242424;">Integrado</span>
<span class="t" style="top:356.15px;font-size:14px;line-height:18px;color:#242424;letter-spacing:-0.011px;left:1681.80px;-webkit-text-stroke:0.6px #242424;">Valor</span>
<span class="t" style="top:829.35px;font-size:14px;line-height:18px;color:#5f5f5f;font-weight:700;letter-spacing:-0.049px;left:1624.10px;">34.093.046,23</span>
<span class="t" style="top:883.85px;font-size:14px;line-height:18px;color:#A81000;letter-spacing:-0.114px;left:68.00px;">Criar filtro</span>
</body></html>
